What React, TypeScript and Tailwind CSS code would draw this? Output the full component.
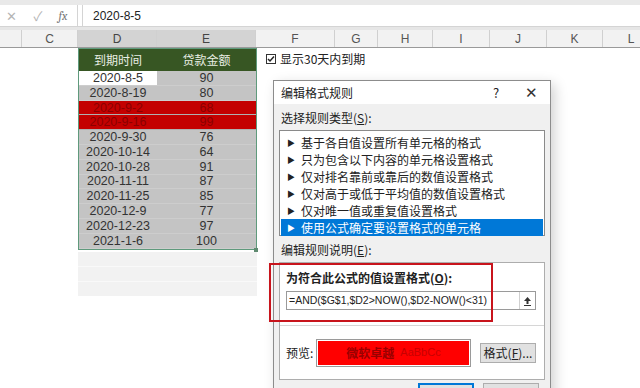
import React from 'react';

const cols: { label: string; w: number }[] = [
  { label: '', w: 22 },
  { label: 'C', w: 56 },
  { label: 'D', w: 79 },
  { label: 'E', w: 99 },
  { label: 'F', w: 79 },
  { label: 'G', w: 43 },
  { label: 'H', w: 55 },
  { label: 'I', w: 57 },
  { label: 'J', w: 57 },
  { label: 'K', w: 56 },
  { label: 'L', w: 57 },
];

const rows: { date: string; amt: number; red?: boolean }[] = [
  { date: '2020-8-5', amt: 90 },
  { date: '2020-8-19', amt: 80 },
  { date: '2020-9-2', amt: 68, red: true },
  { date: '2020-9-16', amt: 99, red: true },
  { date: '2020-9-30', amt: 76 },
  { date: '2020-10-14', amt: 64 },
  { date: '2020-10-28', amt: 91 },
  { date: '2020-11-11', amt: 87 },
  { date: '2020-11-25', amt: 85 },
  { date: '2020-12-9', amt: 77 },
  { date: '2020-12-23', amt: 97 },
  { date: '2021-1-6', amt: 100 },
];

const rules = [
  '基于各自值设置所有单元格的格式',
  '只为包含以下内容的单元格设置格式',
  '仅对排名靠前或靠后的数值设置格式',
  '仅对高于或低于平均值的数值设置格式',
  '仅对唯一值或重复值设置格式',
  '使用公式确定要设置格式的单元格',
];

const font = { fontFamily: '"Noto Sans CJK SC", "Liberation Sans", sans-serif' };
const latin = { fontFamily: '"Liberation Sans", "Noto Sans CJK SC", sans-serif' };

const App: React.FC = () => {
  return (
    <div className="relative w-[640px] h-[388px] overflow-hidden bg-white text-[#222]" style={font}>
      {/* Formula bar */}
      <div className="h-[5px] bg-[#e9e9e9]" />
      <div className="flex h-[22px] bg-white border-b border-[#d4d4d4]">
        <div className="w-[78px] flex items-center text-[#b5b5b5] text-[13px] border-r border-[#d4d4d4]">
          <span className="w-[22px] text-center">✕</span>
          <span className="w-[26px] text-center ml-[3px]">✓</span>
          <span className="w-[24px] text-center italic font-serif text-[#777] text-[12px]">fx</span>
        </div>
        <div className="ml-[4px] flex-1 flex items-center pl-[10px] text-[12px] border-l border-[#d4d4d4]" style={latin}>
          2020-8-5
        </div>
      </div>
      <div className="h-[3px] bg-[#e6e6e6]" />

      {/* Column headers */}
      <div className="flex h-[18px] border-b border-[#9a9a9a]" style={latin}>
        {cols.map((c, i) => {
          const sel = c.label === 'D' || c.label === 'E';
          return (
            <div
              key={i}
              className={`shrink-0 flex items-center justify-center text-[12px] border-r border-[#d0d0d0] ${sel ? 'bg-[#d3d3d3] text-[#444]' : 'bg-[#f2f2f2] text-[#555]'}`}
              style={{ width: c.w }}
            >
              {c.label}
            </div>
          );
        })}
      </div>

      {/* Sheet body */}
      <div className="flex">
        <div className="w-[78px] shrink-0" />
        <div className="w-[179px] shrink-0">
          <div className="border border-[#5f9a7c]">
            <div className="flex h-[22px] bg-[#375623] text-[#e9eee4] text-[12px]">
              <div className="w-[78px] flex items-center justify-center">到期时间</div>
              <div className="flex-1 flex items-center justify-center">贷款金额</div>
            </div>
            {rows.map((r, i) => (
              <div
                key={i}
                className={`flex h-[14.8px] text-[12.5px] leading-[14px] border-b ${r.red ? 'bg-[#c40000] text-[#8a0000] border-[#b0b0b0]' : 'bg-[#c4c4c4] text-[#333] border-[#cdcdcd]'}`}
                style={latin}
              >
                <div className={`w-[78px] flex items-center justify-center ${i === 0 ? 'bg-white' : ''}`}>{r.date}</div>
                <div className="flex-1 flex items-center justify-center">{r.amt}</div>
              </div>
            ))}
          </div>
          <div className="h-[44px] bg-[#f2f2f2] flex flex-col mt-[2px]">
            <div className="h-[15px] border-b border-[#f9f9f9]" />
            <div className="h-[15px] border-b border-[#f9f9f9]" />
          </div>
        </div>
        <div className="flex-1" />
      </div>

      {/* Fill handle */}
      <div className="absolute left-[254px] top-[248px] w-[4px] h-[4px] bg-[#5f8a70]" />

      {/* Checkbox control */}
      <div className="absolute left-[266px] top-[50px] flex items-center gap-[4px] text-[12px]">
        <span className="w-[10px] h-[10px] border border-[#333] flex items-center justify-center">
          <svg width="8" height="8" viewBox="0 0 8 8">
            <path d="M1 4 L3 6 L7 1.5" stroke="#222" strokeWidth="1.5" fill="none" />
          </svg>
        </span>
        <span>显示30天内到期</span>
      </div>

      {/* Dialog */}
      <div className="absolute left-[273px] top-[80px] w-[278px] h-[330px] border border-[#8c8c8c] bg-[#f0f0f0] shadow-[4px_4px_12px_rgba(0,0,0,0.18)] text-[12px]">
        <div className="h-[23px] bg-white flex items-center pl-[7px] pr-[12px]">
          <span className="flex-1">编辑格式规则</span>
          <span className="w-[20px] text-center text-[13px]">?</span>
          <span className="w-[32px] text-right text-[15px] text-[#333]">✕</span>
        </div>
        <div className="px-[5px]">
          <div className="h-[26px] flex items-end pb-[3px] pl-[2px]">
            选择规则类型(<span className="underline">S</span>):
          </div>
          <div className="h-[106px] bg-white border border-[#8a8a8a] py-[3px] px-[1px]">
            {rules.map((t, i) => (
              <div
                key={i}
                className={`h-[17px] flex items-center pl-[6px] gap-[6px] ${i === rules.length - 1 ? 'bg-[#0078d7] text-white' : ''}`}
              >
                <span className="text-[8px]">▶</span>
                <span>{t}</span>
              </div>
            ))}
          </div>
          <div className="h-[26px] flex items-end pb-[3px] pl-[2px]">
            编辑规则说明(<span className="underline">E</span>):
          </div>
          <div className="bg-white border border-[#adadad]">
            <div className="h-[63px] border-b border-[#d6d6d6] pl-[6px] pr-[8px]">
              <div className="h-[28px] flex items-end pb-[4px] font-bold">
                为符合此公式的值设置格式(<span className="underline">O</span>):
              </div>
              <div className="flex h-[19px] border border-[#9a9a9a]">
                <div className="flex-1 flex items-center pl-[2px] text-[10.5px]" style={latin}>
                  =AND($G$1,$D2&gt;NOW(),$D2-NOW()&lt;31)
                </div>
                <div className="w-[16px] border-l border-[#d0d0d0] flex items-center justify-center">
                  <svg width="9" height="10" viewBox="0 0 9 10">
                    <path d="M4.5 1 L1 5 H3.5 V8 H5.5 V5 H8 Z" fill="#333" />
                    <path d="M1 9.5 H8" stroke="#333" strokeWidth="1" />
                  </svg>
                </div>
              </div>
            </div>
            <div className="h-[53px] flex items-center pl-[6px] pr-[8px]">
              <span className="w-[30px]">预览:</span>
              <div className="w-[155px] h-[28px] border border-[#9a9a9a] p-[1px]">
                <div className="w-full h-full bg-[#ff0000] flex items-center justify-center gap-[6px]">
                  <span className="text-[#9a0000] font-bold">微软卓越</span>
                  <span className="text-[#c80000] text-[11px]" style={latin}>AaBbCc</span>
                </div>
              </div>
              <div className="ml-auto w-[56px] h-[20px] bg-[#e1e1e1] border border-[#adadad] flex items-center justify-center">
                格式(<span className="underline">F</span>)...
              </div>
            </div>
          </div>
          <div className="flex justify-end gap-[9px] mt-[3px] pr-[6px]">
            <div className="w-[56px] h-[22px] bg-[#e1e1e1] border-2 border-[#0078d7]" />
            <div className="w-[56px] h-[22px] bg-[#e1e1e1] border border-[#adadad]" />
          </div>
        </div>
      </div>

      {/* Red highlight frame */}
      <div className="absolute left-[269px] top-[263px] w-[224px] h-[59px] border-2 border-[#c8141c]" />
    </div>
  );
};

export default App;
